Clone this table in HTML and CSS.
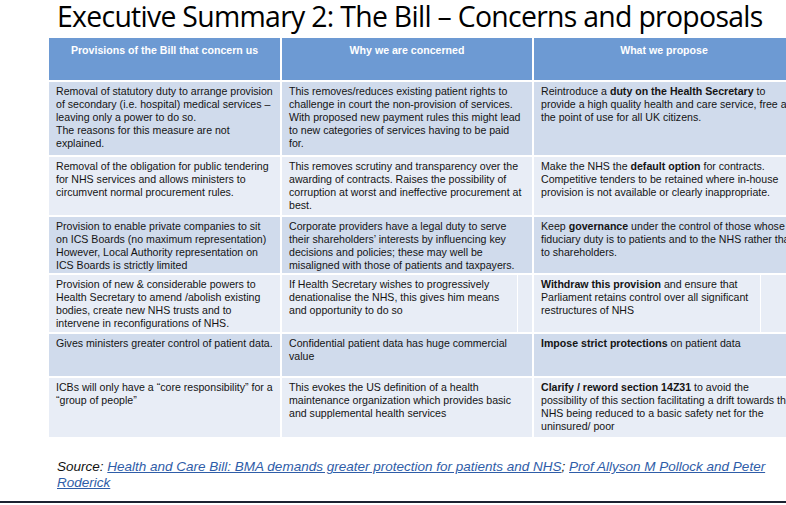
FILE: index.html
```html
<!DOCTYPE html>
<html lang="en">
<head>
<meta charset="utf-8">
<title>Executive Summary 2</title>
<link rel="stylesheet" href="styles.css">
</head>
<body>
<div class="slide">
  <h1 class="title">Executive Summary 2: The Bill – Concerns and proposals</h1>
  <div class="grid">
    <div class="head">Provisions of the Bill that concern us</div>
    <div class="head">Why we are concerned</div>
    <div class="head">What we propose</div>

    <div class="cell dark">Removal of statutory duty to arrange provision<br>of secondary (i.e. hospital) medical services –<br>leaving only a power to do so.<br>The reasons for this measure are not<br>explained.</div>
    <div class="cell dark">This removes/reduces existing patient rights to<br>challenge in court the non-provision of services.<br>With proposed new payment rules this might lead<br>to new categories of services having to be paid<br>for.</div>
    <div class="cell dark">Reintroduce a <b>duty on the Health Secretary</b> to<br>provide a high quality health and care service, free at<br>the point of use for all UK citizens.</div>

    <div class="cell light">Removal of the obligation for public tendering<br>for NHS services and allows ministers to<br>circumvent normal procurement rules.</div>
    <div class="cell light">This removes scrutiny and transparency over the<br>awarding of contracts. Raises the possibility of<br>corruption at worst and ineffective procurement at<br>best.</div>
    <div class="cell light">Make the NHS the <b>default option</b> for contracts.<br>Competitive tenders to be retained where in-house<br>provision is not available or clearly inappropriate.</div>

    <div class="cell dark">Provision to enable private companies to sit<br>on ICS Boards (no maximum representation)<br>However, Local Authority representation on<br>ICS Boards is strictly limited</div>
    <div class="cell dark">Corporate providers have a legal duty to serve<br>their shareholders’ interests by influencing key<br>decisions and policies; these may well be<br>misaligned with those of patients and taxpayers.</div>
    <div class="cell dark">Keep <b>governance</b> under the control of those whose<br>fiduciary duty is to patients and to the NHS rather than<br>to shareholders.</div>

    <div class="cell light">Provision of new &amp; considerable powers to<br>Health Secretary to amend /abolish existing<br>bodies, create new NHS trusts and to<br>intervene in reconfigurations of NHS.</div>
    <div class="cell light split split-a">If Health Secretary wishes to progressively<br>denationalise the NHS, this gives him means<br>and opportunity to do so</div>
    <div class="cell light split split-b"><b>Withdraw this provision</b> and ensure that<br>Parliament retains control over all significant<br>restructures of NHS</div>

    <div class="cell dark">Gives ministers greater control of patient data.</div>
    <div class="cell dark">Confidential patient data has huge commercial<br>value</div>
    <div class="cell dark"><b>Impose strict protections</b> on patient data</div>

    <div class="cell light">ICBs will only have a “core responsibility” for a<br>“group of people”</div>
    <div class="cell light">This evokes the US definition of a health<br>maintenance organization which provides basic<br>and supplemental health services</div>
    <div class="cell light"><b>Clarify / reword section 14Z31</b> to avoid the<br>possibility of this section facilitating a drift towards the<br>NHS being reduced to a basic safety net for the<br>uninsured/ poor</div>
  </div>
  <p class="source"><i>Source</i>: <a class="link" href="#">Health and Care Bill: BMA demands greater protection for patients and NHS</a>; <a class="link" href="#">Prof Allyson M Pollock and Peter Roderick</a></p>
</div>
<div class="rule"></div>
</body>
</html>
```

FILE: styles.css
```css
html, body {
  margin: 0;
  padding: 0;
  background: #ffffff;
  overflow: hidden;
}
body {
  width: 786px;
  height: 505px;
  position: relative;
  font-family: "Liberation Sans", Arial, sans-serif;
  color: #111;
}
.slide {
  width: 786px;
  height: 500px;
  overflow: hidden;
}
.title {
  margin: 0;
  padding: 0 0 0 57px;
  height: 38px;
  line-height: 33px;
  font-family: "Open Sans", "Noto Sans", sans-serif;
  font-weight: 400;
  font-size: 28.4px;
  letter-spacing: -0.7px;
  color: #000;
  white-space: nowrap;
}
.grid {
  margin-left: 49px;
  width: 760px;
  display: grid;
  grid-template-columns: 231px 250px 260px;
  grid-template-rows: 42px 73px 58px 56px 57px 42px 59px;
  gap: 2px;
  background: #ffffff;
}
.head {
  background: #6d9ad3;
  color: #ffffff;
  font-weight: bold;
  font-size: 10.6px;
  text-align: center;
  padding-top: 6px;
  line-height: 13px;
}
.cell {
  font-size: 10.6px;
  line-height: 13px;
  padding: 3px 0 0 7px;
  color: #141414;
  white-space: nowrap;
  overflow: hidden;
}
.cell b { font-weight: bold; }
.dark { background: #d0dbec; }
.light { background: #e8edf6; }
.split { position: relative; }
.split::after {
  content: "";
  position: absolute;
  top: 0;
  bottom: 0;
  width: 1px;
  background: #ffffff;
}
.split-a::after { left: 235px; }
.split-b::after { left: 226px; }
.source {
  margin: 22px 0 0 57px;
  width: 716px;
  font-size: 13.5px;
  line-height: 16px;
  font-style: italic;
  color: #111;
}
.link {
  color: #2f5da8;
  text-decoration: underline;
}
.rule {
  position: absolute;
  left: 0;
  right: 0;
  top: 501px;
  height: 2px;
  background: #1b2231;
}
```
